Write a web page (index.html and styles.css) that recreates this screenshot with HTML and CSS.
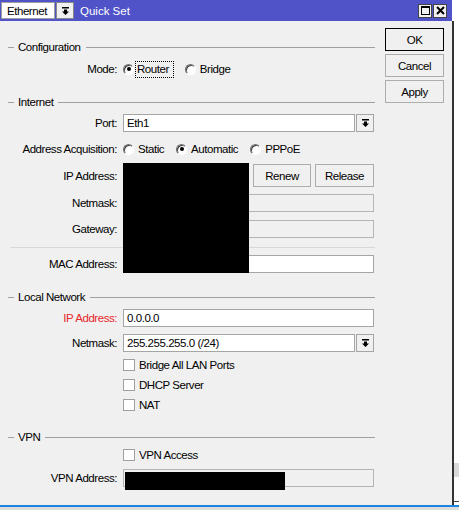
FILE: index.html
```html
<!DOCTYPE html>
<html>
<head>
    <meta charset="UTF-8">
    <meta name="viewport" content="width=device-width, initial-scale=1.0">
    <title>Quick Set</title>
    <link rel="stylesheet" href="styles.css">
</head>
<body>
    <div class="screen">
        <div class="window">
            <div class="titlebar">
                <div class="mode-combo">
                    <span class="mode-value">Ethernet</span>
                    <span class="drop-btn">
                        <svg width="7" height="8" viewBox="0 0 7 8"><rect width="7" height="1.5"/><path d="M2 2.5h3v2h2L3.5 8 0 4.5h2z"/></svg>
                    </span>
                </div>
                <span class="title">Quick Set</span>
                <div class="win-btns">
                    <span class="win-btn">
                        <svg width="9" height="9" viewBox="0 0 9 9"><rect x="0.5" y="0.5" width="8" height="8" fill="none" stroke="#000"/><rect width="9" height="2"/></svg>
                    </span>
                    <span class="win-btn">
                        <svg width="9" height="9" viewBox="0 0 9 9"><path d="M1 1l7 7M8 1L1 8" stroke="#000" stroke-width="2"/></svg>
                    </span>
                </div>
            </div>

            <div class="window-body">
                <div class="form">
                    <!-- Configuration -->
                    <div class="legend"><span>Configuration</span></div>
                    <div class="row first-row">
                        <label>Mode:</label>
                        <div class="choices">
                            <span class="choice"><span class="radio checked"></span><span class="focus">Router</span></span>
                            <span class="choice"><span class="radio"></span>Bridge</span>
                        </div>
                    </div>

                    <!-- Internet -->
                    <div class="legend section-gap"><span>Internet</span></div>
                    <div class="row">
                        <label>Port:</label>
                        <div class="combo">
                            <span class="input">Eth1</span>
                            <span class="drop-btn">
                                <svg width="7" height="8" viewBox="0 0 7 8"><rect width="7" height="1.5"/><path d="M2 2.5h3v2h2L3.5 8 0 4.5h2z"/></svg>
                            </span>
                        </div>
                    </div>
                    <div class="row">
                        <label>Address Acquisition:</label>
                        <div class="choices">
                            <span class="choice"><span class="radio"></span>Static</span>
                            <span class="choice"><span class="radio checked"></span>Automatic</span>
                            <span class="choice"><span class="radio"></span>PPPoE</span>
                        </div>
                    </div>
                    <div class="row row-tall">
                        <label>IP Address:</label>
                        <div class="with-btns">
                            <span class="input ip-input"></span>
                            <button class="btn">Renew</button>
                            <button class="btn">Release</button>
                        </div>
                    </div>
                    <div class="row row-tall">
                        <label>Netmask:</label>
                        <span class="input disabled"></span>
                    </div>
                    <div class="row">
                        <label>Gateway:</label>
                        <span class="input disabled"></span>
                    </div>
                    <div class="separator"></div>
                    <div class="row row-short">
                        <label>MAC Address:</label>
                        <span class="input"></span>
                    </div>

                    <!-- Local Network -->
                    <div class="legend section-gap-md"><span>Local Network</span></div>
                    <div class="row">
                        <label class="required">IP Address:</label>
                        <span class="input">0.0.0.0</span>
                    </div>
                    <div class="row row-short">
                        <label>Netmask:</label>
                        <div class="combo">
                            <span class="input">255.255.255.0 (/24)</span>
                            <span class="drop-btn">
                                <svg width="7" height="8" viewBox="0 0 7 8"><rect width="7" height="1.5"/><path d="M2 2.5h3v2h2L3.5 8 0 4.5h2z"/></svg>
                            </span>
                        </div>
                    </div>
                    <div class="row row-check">
                        <span></span>
                        <span class="choice"><span class="checkbox"></span>Bridge All LAN Ports</span>
                    </div>
                    <div class="row row-check">
                        <span></span>
                        <span class="choice"><span class="checkbox"></span>DHCP Server</span>
                    </div>
                    <div class="row row-check">
                        <span></span>
                        <span class="choice"><span class="checkbox"></span>NAT</span>
                    </div>

                    <!-- VPN -->
                    <div class="legend section-gap-lg"><span>VPN</span></div>
                    <div class="row row-check">
                        <span></span>
                        <span class="choice"><span class="checkbox"></span>VPN Access</span>
                    </div>
                    <div class="row">
                        <label>VPN Address:</label>
                        <span class="input disabled"></span>
                    </div>

                    <!-- blacked out values -->
                    <div class="redact redact-wan"></div>
                    <div class="redact redact-vpn"></div>
                </div>

                <div class="actions">
                    <button class="btn btn-default">OK</button>
                    <button class="btn">Cancel</button>
                    <button class="btn">Apply</button>
                </div>
            </div>
        </div>
        <div class="side">
            <div class="side-band"></div>
            <div class="side-line"></div>
        </div>
    </div>
    <div class="taskbar"></div>
</body>
</html>
```

FILE: styles.css
```css
body {
    margin: 0;
    background: #fff;
    font-family: "Liberation Sans", Arial, sans-serif;
    font-size: 11.5px;
    letter-spacing: -0.45px;
    color: #000;
}

.screen {
    display: flex;
    height: 505px;
}

.window {
    width: 454px;
    display: flex;
    flex-direction: column;
}

/* title bar */
.titlebar {
    width: 452px;
    height: 21px;
    background: #5052c8;
    display: flex;
    align-items: center;
    box-sizing: border-box;
    padding: 0 0 0 1px;
}

.mode-combo {
    display: flex;
    gap: 1px;
    height: 17px;
}

.mode-value {
    width: 54px;
    box-sizing: border-box;
    background: #fff;
    border: 1px solid #a0a0a0;
    padding: 0 5px;
    display: flex;
    align-items: center;
}

.title {
    color: #fff;
    font-size: 11.5px;
    letter-spacing: 0;
    margin-left: 6px;
}

.win-btns {
    margin-left: auto;
    margin-right: 5px;
    display: flex;
    gap: 1px;
}

.win-btn {
    width: 14px;
    height: 14px;
    box-sizing: border-box;
    background: #f0f0f0;
    border: 1px solid #444;
    display: flex;
    align-items: center;
    justify-content: center;
}

/* body */
.window-body {
    flex: 1;
    background: #f0f0f0;
    border-right: 2px solid #333;
    display: flex;
    gap: 10px;
}

.form {
    position: relative;
    width: 367px;
    padding: 18px 0 0 8px;
}

.legend {
    height: 16px;
    display: flex;
    align-items: center;
}

.legend::before {
    content: "";
    width: 6px;
    border-top: 1px solid #a0a0a0;
}

.legend::after {
    content: "";
    flex: 1;
    border-top: 1px solid #a0a0a0;
}

.legend span {
    padding: 0 5px 0 4px;
}

.section-gap {
    margin-top: 12px;
}

.section-gap-md {
    margin-top: 13px;
}

.section-gap-lg {
    margin-top: 14px;
}

.row {
    height: 26px;
    display: grid;
    grid-template-columns: 109px 251px;
    column-gap: 6px;
    align-items: center;
}

.first-row {
    margin-top: 1px;
}

.row-tall {
    height: 27px;
}

.row-short {
    height: 24px;
}

.row-check {
    height: 20px;
}

.row label {
    text-align: right;
}

.row label.required {
    color: #e8262b;
}

.input {
    height: 18px;
    box-sizing: border-box;
    background: #fff;
    border: 1px solid #a5a5a5;
    padding: 0 3px;
    display: flex;
    align-items: center;
}

.input.disabled {
    background: #f0f0f0;
    border-color: #b4b4b4;
}

.combo {
    display: flex;
    gap: 1px;
}

.combo .input {
    flex: 1;
}

.drop-btn {
    width: 18px;
    height: 18px;
    box-sizing: border-box;
    background: #f0f0f0;
    border: 1px solid #a5a5a5;
    display: flex;
    align-items: center;
    justify-content: center;
}

.mode-combo .drop-btn {
    height: 17px;
    border-color: #888;
}

.with-btns {
    display: flex;
    gap: 4px;
    align-items: center;
}

.ip-input {
    width: 126px;
}

.with-btns .btn {
    width: 58px;
}

.with-btns .btn:last-child {
    width: 59px;
}

.separator {
    margin: 5px 0 4px 2px;
    border-top: 1px solid #d8d8d8;
}

.choices {
    display: flex;
    gap: 12px;
}

.choice {
    display: flex;
    align-items: center;
    gap: 4px;
}

.radio {
    width: 11px;
    height: 11px;
    box-sizing: border-box;
    border-radius: 50%;
    border: 1px solid;
    border-color: #707070 #fff #fff #707070;
    box-shadow: inset 1px 1px 0 #404040;
    background: #fff;
    display: flex;
    align-items: center;
    justify-content: center;
}

.radio.checked::after {
    content: "";
    width: 4px;
    height: 4px;
    border-radius: 50%;
    background: #000;
}

.focus {
    outline: 1px dotted #000;
    padding: 1px 4px 2px 1px;
    margin-left: -2px;
}

.checkbox {
    width: 12px;
    height: 12px;
    box-sizing: border-box;
    background: #fff;
    border: 1px solid #a0a0a0;
}

.btn {
    height: 23px;
    box-sizing: border-box;
    background: #f0f0f0;
    border: 1px solid #adadad;
    font-family: inherit;
    font-size: 11.5px;
    letter-spacing: -0.45px;
    color: #000;
    padding: 0;
}

.actions {
    width: 59px;
    padding-top: 7px;
    display: flex;
    flex-direction: column;
    gap: 3px;
}

.btn-default {
    border-color: #000;
}

.redact {
    position: absolute;
    background: #000;
}

.redact-wan {
    left: 123px;
    top: 142px;
    width: 126px;
    height: 110px;
}

.redact-vpn {
    left: 125px;
    top: 451px;
    width: 160px;
    height: 18px;
}

/* strip of the window behind */
.side {
    flex: 1;
}

.side-band {
    margin-top: 463px;
    height: 14px;
    background: #d9d9d9;
}

.side-line {
    margin-top: 24px;
    height: 1px;
    background: #444;
}

.taskbar {
    height: 5px;
    background: #dcdcdc;
    border-top: 2px solid #1a86e0;
}
```
